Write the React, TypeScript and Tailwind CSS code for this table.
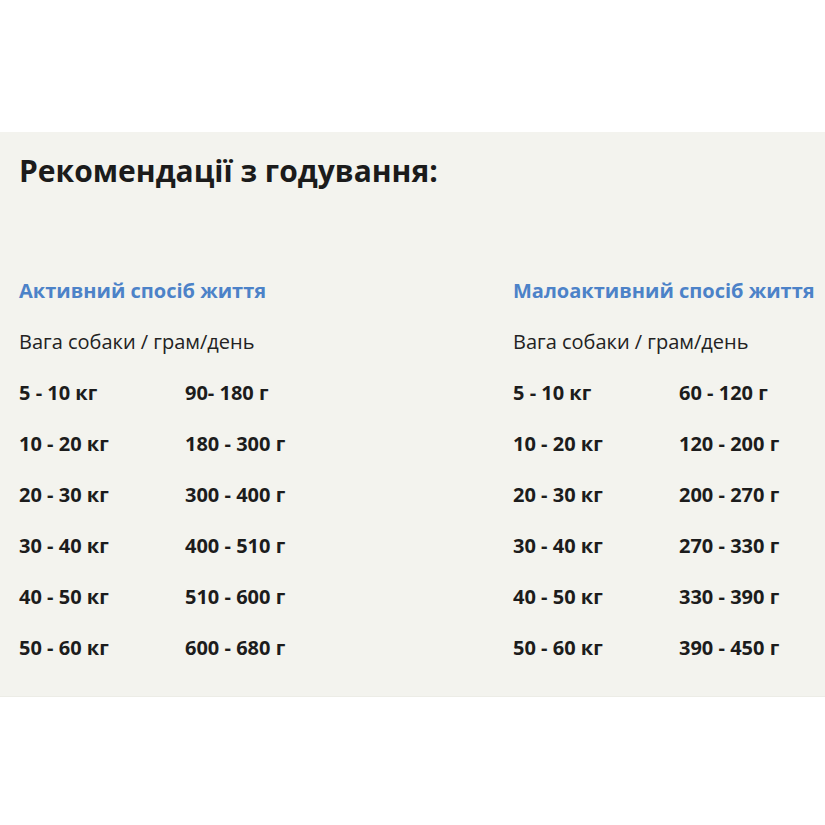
const active = [
  ["5 - 10 кг", "90- 180 г"],
  ["10 - 20 кг", "180 - 300 г"],
  ["20 - 30 кг", "300 - 400 г"],
  ["30 - 40 кг", "400 - 510 г"],
  ["40 - 50 кг", "510 - 600 г"],
  ["50 - 60 кг", "600 - 680 г"],
];

const low = [
  ["5 - 10 кг", "60 - 120 г"],
  ["10 - 20 кг", "120 - 200 г"],
  ["20 - 30 кг", "200 - 270 г"],
  ["30 - 40 кг", "270 - 330 г"],
  ["40 - 50 кг", "330 - 390 г"],
  ["50 - 60 кг", "390 - 450 г"],
];

function Column({ title, rows }: { title: string; rows: string[][] }) {
  return (
    <div className="w-[494px] shrink-0">
      <h3 className="text-[20px] leading-[51px] font-bold text-[#4c82c8] whitespace-nowrap">{title}</h3>
      <p className="text-[20px] leading-[51px] text-[#222]">Вага собаки / грам/день</p>
      {rows.map(([w, g]) => (
        <div key={w} className="flex text-[20px] leading-[51px] font-bold text-[#1c1c1c]">
          <span className="w-[166px]">{w}</span>
          <span>{g}</span>
        </div>
      ))}
    </div>
  );
}

export default function App() {
  return (
    <div className="w-[825px] h-[825px] bg-white overflow-hidden" style={{ fontFamily: '"Open Sans", "Noto Sans", sans-serif' }}>
      <div className="h-[132px]" />
      <div className="bg-[#f3f3ee] h-[565px] pl-[19px] pt-[19px] border-b border-[#ecece6]">
        <h2 className="text-[30px] leading-[40px] font-bold text-[#1b1b1b]">Рекомендації з годування:</h2>
        <div className="flex mt-[74px]">
          <Column title="Активний спосіб життя" rows={active} />
          <Column title="Малоактивний спосіб життя" rows={low} />
        </div>
      </div>
    </div>
  );
}
